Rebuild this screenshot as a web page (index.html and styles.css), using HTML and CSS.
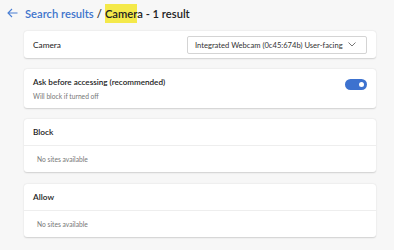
FILE: index.html
```html
<!DOCTYPE html>
<html>
<head>
<meta charset="utf-8">
<link rel="stylesheet" href="styles.css">
</head>
<body>
<div class="page">
  <div class="header">
    <svg class="back" width="11" height="10" viewBox="0 0 11 10"><path d="M5 1 L1 5 L5 9 M1 5 H10.5" fill="none" stroke="#4a7fd4" stroke-width="1.1"/></svg>
    <span class="link">Search results</span>
    <span class="sep">/</span>
    <span class="title"><mark class="hl">Camer</mark>a - 1 result</span>
  </div>
  <div class="cards">
    <div class="card row">
      <span class="label">Camera</span>
      <div class="select">
        <span>Integrated Webcam (0c45:674b) User-facing</span>
        <svg width="8" height="5" viewBox="0 0 8 5"><path d="M0.5 0.5 L4 4 L7.5 0.5" fill="none" stroke="#555" stroke-width="0.8"/></svg>
      </div>
    </div>
    <div class="card ask">
      <div class="ask-text">
        <div class="strong">Ask before accessing (recommended)</div>
        <div class="sub">Will block if turned off</div>
      </div>
      <div class="toggle"><span class="knob"></span></div>
    </div>
    <div class="card list">
      <div class="list-head">Block</div>
      <div class="list-body">No sites available</div>
    </div>
    <div class="card list">
      <div class="list-head">Allow</div>
      <div class="list-body">No sites available</div>
    </div>
  </div>
</div>
</body>
</html>
```
FILE: styles.css
```css
html, body {
  margin: 0;
  padding: 0;
  background: #f7f7f7;
}
body {
  font-family: Lato, "Noto Sans", sans-serif;
  color: #222;
}
.page {
  width: 394px;
  height: 250px;
  overflow: hidden;
}
.header {
  height: 27px;
  display: flex;
  align-items: center;
  padding-left: 7px;
  font-size: 11.2px;
  font-weight: 600;
}
.back {
  margin-right: 7px;
  margin-top: -1px;
}
.link {
  color: #3d74cc;
}
.sep {
  color: #333;
  margin: 0 3px;
}
.title {
  color: #222;
}
.hl {
  background: #f4e94a;
  color: #222;
  padding: 3px 0;
}
.cards {
  padding: 4px 18px 0 24px;
  display: flex;
  flex-direction: column;
  gap: 11px;
}
.card {
  background: #fff;
  border-radius: 3px;
  box-shadow: 0 0.5px 1.5px rgba(0,0,0,0.16);
}
.row {
  height: 27px;
  display: flex;
  align-items: center;
  justify-content: space-between;
  padding: 0 9px;
}
.label {
  font-size: 8.3px;
  color: #222;
}
.select {
  width: 180px;
  height: 18px;
  border: 1px solid #d4d4d4;
  border-radius: 2px;
  display: flex;
  align-items: center;
  justify-content: space-between;
  padding: 0 10px 0 7px;
  box-sizing: border-box;
  font-size: 7.6px;
  color: #333;
  white-space: nowrap;
}
.ask {
  height: 39px;
  display: flex;
  align-items: center;
  justify-content: space-between;
  padding: 0 9px;
  box-sizing: border-box;
}
.strong {
  font-size: 8.1px;
  font-weight: 600;
  color: #222;
  margin-top: -1px;
}
.sub {
  font-size: 6.7px;
  color: #777;
  margin-top: 5px;
}
.toggle {
  width: 22px;
  height: 11px;
  border-radius: 6px;
  background: #3d72cf;
  position: relative;
  margin-top: -8px;
}
.knob {
  position: absolute;
  right: 3px;
  top: 3px;
  width: 5px;
  height: 5px;
  border-radius: 50%;
  background: #fff;
}
.list {
  display: flex;
  flex-direction: column;
}
.list-head {
  height: 26px;
  display: flex;
  align-items: center;
  padding: 0 9px;
  font-size: 8.3px;
  font-weight: 600;
  color: #222;
  border-bottom: 1px solid #eeeeee;
}
.list-body {
  height: 26px;
  display: flex;
  align-items: center;
  padding: 0 13px;
  font-size: 6.7px;
  color: #777;
}
.cards .list + .list {
  margin-top: 1px;
}
```
